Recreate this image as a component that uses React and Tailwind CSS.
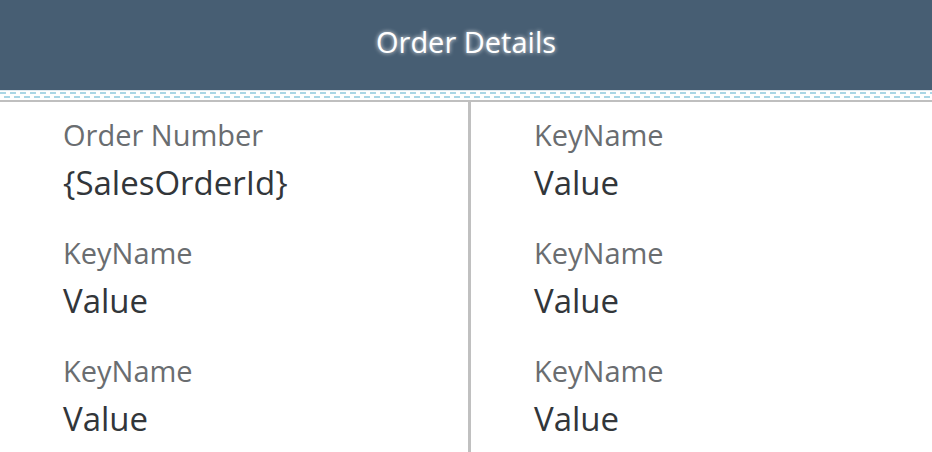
import React from "react";

const rows = [
  [
    { key: "Order Number", value: "{SalesOrderId}" },
    { key: "KeyName", value: "Value" },
  ],
  [
    { key: "KeyName", value: "Value" },
    { key: "KeyName", value: "Value" },
  ],
  [
    { key: "KeyName", value: "Value" },
    { key: "KeyName", value: "Value" },
  ],
];

function Field({ label, value }) {
  return (
    <div className="flex flex-col">
      <span className="text-[29px] leading-[34px] text-[#6a6d70]">{label}</span>
      <span className="mt-[11px] text-[33px] leading-[40px] text-[#32363a]">{value}</span>
    </div>
  );
}

export default function App() {
  const left = rows.map((r) => r[0]);
  const right = rows.map((r) => r[1]);

  return (
    <div className="w-[932px] h-[452px] overflow-hidden bg-white font-['Open_Sans',sans-serif]">
      {/* header */}
      <header className="h-[90px] bg-[#475e73] flex items-center justify-center">
        <h1 className="text-[29px] font-medium text-white [text-shadow:0_0_4px_rgba(255,255,255,0.9)] -mt-[6px]">
          Order Details
        </h1>
      </header>

      {/* dashed strip */}
      <div className="h-[1px] bg-[#dde8ee]" />
      <div className="h-[1px]" />
      <div className="h-[2px] bg-[repeating-linear-gradient(90deg,#a9d6e5_0_6px,transparent_6px_10px)]" />
      <div className="h-[2px]" />
      <div className="h-[2px] bg-[repeating-linear-gradient(90deg,transparent_0_4px,#a9d6e5_4px_10px)]" />
      <div className="h-[2px]" />
      <div className="h-[2px] bg-[#bfbfbf]" />

      {/* content */}
      <main className="grid grid-cols-[471px_1fr]">
        <div className="border-r-[3px] border-[#c0c0c0] pl-[63px] pt-[16px] flex flex-col gap-[33px] h-[360px]">
          {left.map((f, i) => (
            <Field key={i} label={f.key} value={f.value} />
          ))}
        </div>
        <div className="pl-[63px] pt-[16px] flex flex-col gap-[33px]">
          {right.map((f, i) => (
            <Field key={i} label={f.key} value={f.value} />
          ))}
        </div>
      </main>
    </div>
  );
}
